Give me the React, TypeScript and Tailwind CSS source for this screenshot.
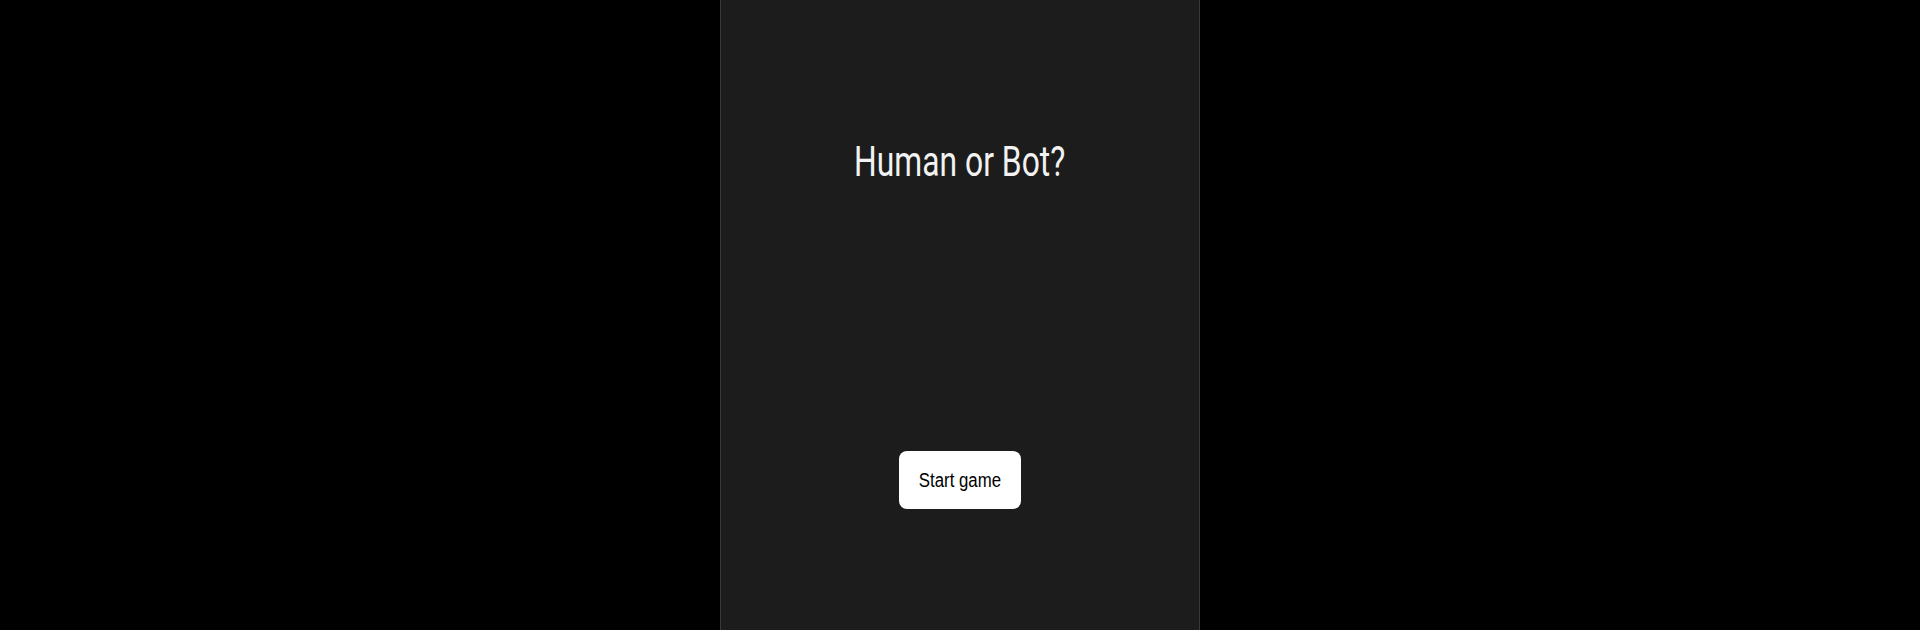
import React from 'react';

const App: React.FC = () => {
  return (
    <div className="w-full h-[630px] bg-black flex justify-center">
      <div className="w-[480px] h-full bg-[#1c1c1c] border-x border-[#383838] flex flex-col items-center">
        {/* Title */}
        <h1 className="mt-[140px] h-[43px] text-[43px] leading-none text-[#f2f2f2] font-normal font-['Roboto',sans-serif] scale-x-[0.74] whitespace-nowrap">
          Human or Bot?
        </h1>

        {/* Start */}
        <button
          type="button"
          className="mt-[268px] w-[122px] h-[58px] bg-white rounded-lg flex items-center justify-center"
        >
          <span className="text-[20px] leading-none text-black font-['Liberation_Sans',Arial,sans-serif] scale-x-[0.84] whitespace-nowrap">
            Start game
          </span>
        </button>
      </div>
    </div>
  );
};

export default App;
